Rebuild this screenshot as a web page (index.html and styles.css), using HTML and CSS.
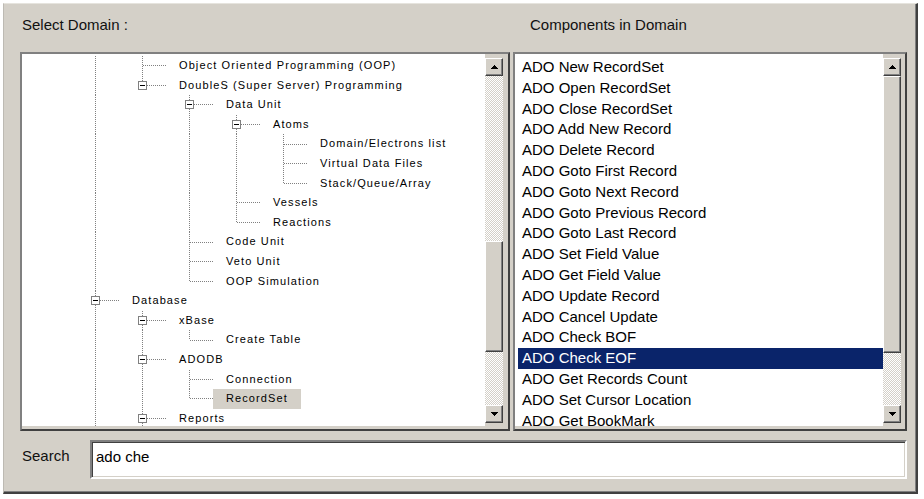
FILE: index.html
```html
<!DOCTYPE html>
<html>
<head>
<meta charset="utf-8">
<link rel="stylesheet" href="styles.css">
</head>
<body>
<div class="frame">
  <div class="header">
    <div class="lbl-left">Select Domain :</div>
    <div class="lbl-right">Components in Domain</div>
  </div>
  <div class="panels">
    <div class="panel panel-left">
      <div class="tree">
        <div class="row"><span class="c I"></span><span class="c T"></span><span class="t">Object Oriented Programming (OOP)</span></div>
        <div class="row"><span class="c I"></span><span class="c L"><i class="box"></i></span><span class="t">DoubleS (Super Server) Programming</span></div>
        <div class="row"><span class="c I"></span><span class="c"></span><span class="c T"><i class="box"></i></span><span class="t">Data Unit</span></div>
        <div class="row"><span class="c I"></span><span class="c"></span><span class="c I"></span><span class="c T"><i class="box"></i></span><span class="t">Atoms</span></div>
        <div class="row"><span class="c I"></span><span class="c"></span><span class="c I"></span><span class="c I"></span><span class="c T"></span><span class="t">Domain/Electrons list</span></div>
        <div class="row"><span class="c I"></span><span class="c"></span><span class="c I"></span><span class="c I"></span><span class="c T"></span><span class="t">Virtual Data Files</span></div>
        <div class="row"><span class="c I"></span><span class="c"></span><span class="c I"></span><span class="c I"></span><span class="c L"></span><span class="t">Stack/Queue/Array</span></div>
        <div class="row"><span class="c I"></span><span class="c"></span><span class="c I"></span><span class="c T"></span><span class="t">Vessels</span></div>
        <div class="row"><span class="c I"></span><span class="c"></span><span class="c I"></span><span class="c L"></span><span class="t">Reactions</span></div>
        <div class="row"><span class="c I"></span><span class="c"></span><span class="c T"></span><span class="t">Code Unit</span></div>
        <div class="row"><span class="c I"></span><span class="c"></span><span class="c T"></span><span class="t">Veto Unit</span></div>
        <div class="row"><span class="c I"></span><span class="c"></span><span class="c L"></span><span class="t">OOP Simulation</span></div>
        <div class="row"><span class="c T"><i class="box"></i></span><span class="t">Database</span></div>
        <div class="row"><span class="c I"></span><span class="c T"><i class="box"></i></span><span class="t">xBase</span></div>
        <div class="row"><span class="c I"></span><span class="c I"></span><span class="c L"></span><span class="t">Create Table</span></div>
        <div class="row"><span class="c I"></span><span class="c T"><i class="box"></i></span><span class="t">ADODB</span></div>
        <div class="row"><span class="c I"></span><span class="c I"></span><span class="c T"></span><span class="t">Connection</span></div>
        <div class="row"><span class="c I"></span><span class="c I"></span><span class="c L"></span><span class="t sel">RecordSet</span></div>
        <div class="row"><span class="c I"></span><span class="c T"><i class="box"></i></span><span class="t">Reports</span></div>
      </div>
      <div class="sb sb-left">
        <div class="btn"><svg width="7" height="4" viewBox="0 0 7 4"><polygon points="3.5,0 7,4 0,4" fill="#000"/></svg></div>
        <div class="track"><div class="thumb thumb-left"></div></div>
        <div class="btn"><svg width="7" height="4" viewBox="0 0 7 4"><polygon points="0,0 7,0 3.5,4" fill="#000"/></svg></div>
      </div>
    </div>
    <div class="panel panel-right">
      <div class="list">
        <div class="item">ADO New RecordSet</div>
        <div class="item">ADO Open RecordSet</div>
        <div class="item">ADO Close RecordSet</div>
        <div class="item">ADO Add New Record</div>
        <div class="item">ADO Delete Record</div>
        <div class="item">ADO Goto First Record</div>
        <div class="item">ADO Goto Next Record</div>
        <div class="item">ADO Goto Previous Record</div>
        <div class="item">ADO Goto Last Record</div>
        <div class="item">ADO Set Field Value</div>
        <div class="item">ADO Get Field Value</div>
        <div class="item">ADO Update Record</div>
        <div class="item">ADO Cancel Update</div>
        <div class="item">ADO Check BOF</div>
        <div class="item sel">ADO Check EOF</div>
        <div class="item">ADO Get Records Count</div>
        <div class="item">ADO Set Cursor Location</div>
        <div class="item">ADO Get BookMark</div>
      </div>
      <div class="sb sb-right">
        <div class="btn"><svg width="7" height="4" viewBox="0 0 7 4"><polygon points="3.5,0 7,4 0,4" fill="#000"/></svg></div>
        <div class="track"><div class="thumb thumb-right"></div></div>
        <div class="btn"><svg width="7" height="4" viewBox="0 0 7 4"><polygon points="0,0 7,0 3.5,4" fill="#000"/></svg></div>
      </div>
    </div>
  </div>
  <div class="search">
    <div class="search-lbl">Search</div>
    <div class="search-box">ado che</div>
  </div>
</div>
</body>
</html>
```

FILE: styles.css
```css
* { box-sizing: border-box; }
html, body { margin: 0; padding: 0; background: #fff; }
body { font-family: "Liberation Sans", Arial, sans-serif; color: #000; }

.frame {
  --vdot: repeating-linear-gradient(to bottom, #808080 0 1px, transparent 1px 2px);
  --hdot: repeating-linear-gradient(to right, #808080 0 1px, transparent 1px 2px);
  margin: 3px 0 0 3px;
  width: 915px;
  height: 491px;
  background: #d4d0c8;
  border-style: solid;
  border-width: 1px 2px 2px 1px;
  border-color: #e6e4de #404040 #404040 #bdbab3;
  box-shadow: inset -1px -1px #808080;
  padding: 0 9px 0 16px;
  display: flex;
  flex-direction: column;
}

.header { height: 48px; flex: none; display: flex; padding-top: 12px; font-size: 15px; line-height: 17px; color: #111; }
.lbl-left { width: 493px; padding-left: 2px; }
.lbl-right { padding-left: 17px; }

.panels { height: 379px; flex: none; display: flex; gap: 3px; }
.panel {
  border: 2px solid;
  border-color: #808080 #404040 #404040 #808080;
  display: flex;
  background: #d4d0c8;
  padding-bottom: 3px;
}
.panel-left { width: 490px; }
.panel-right { width: 394px; }

.tree {
  flex: 1;
  background: #fff;
  overflow: hidden;
  padding: 2px 0 0 50px;
  font-size: 11px;
  letter-spacing: 1.1px;
}
.row { height: 19.6px; display: flex; align-items: stretch; white-space: nowrap; }
.c { width: 47px; flex: none; display: flex; align-items: center; padding-left: 19px; }
.I { background: var(--vdot) 23px 0 / 1px 100% no-repeat; }
.T { background: var(--vdot) 23px 0 / 1px 100% no-repeat, var(--hdot) 24px 50% / 23px 1px no-repeat; }
.L { background: var(--vdot) 23px 0 / 1px 50% no-repeat, var(--hdot) 24px 50% / 23px 1px no-repeat; }
.box {
  display: block;
  width: 9px;
  height: 9px;
  border: 1px solid #808080;
  background: linear-gradient(#000, #000) center / 5px 1px no-repeat, #fff;
}
.t { padding: 0 13px; line-height: 19.6px; }
.t.sel { background: #d4d0c8; }

.sb { flex: none; display: flex; flex-direction: column; padding: 4px 5px 3px 0; width: 23px; }
.sb-right { width: 22px; padding-right: 4px; }
.btn {
  width: 18px;
  height: 18px;
  flex: none;
  background: #d4d0c8;
  border: 1px solid;
  border-color: #fff #404040 #404040 #fff;
  box-shadow: inset -1px -1px #808080;
  display: flex;
  align-items: center;
  justify-content: center;
}
.btn svg { display: block; shape-rendering: crispEdges; }
.track {
  flex: 1;
  background: repeating-conic-gradient(#fff 0 25%, #d4d0c8 0 50%) 0 0 / 2px 2px;
  display: flex;
  flex-direction: column;
}
.thumb {
  flex: none;
  background: #d4d0c8;
  border: 1px solid;
  border-color: #fff #404040 #404040 #fff;
  box-shadow: inset -1px -1px #808080;
}
.thumb-left { margin-top: 165px; height: 111px; }
.thumb-right { margin-top: 0; height: 277px; }

.list {
  flex: 1;
  background: #fff;
  overflow: hidden;
  padding: 3px 0 0 3px;
  font-size: 15px;
}
.item { height: 20.8px; line-height: 20.8px; padding-left: 4px; white-space: nowrap; }
.item.sel { background: #0a246a; color: #fff; }

.search { display: flex; margin-top: 9px; height: 39px; flex: none; }
.search-lbl { width: 70px; flex: none; padding: 7px 0 0 2px; font-size: 15px; line-height: 17px; color: #111; }
.search-box {
  flex: 1;
  background: #fff;
  border: 2px solid;
  border-color: #808080 #fff #fff #808080;
  box-shadow: inset 1px 1px #404040, inset -1px -1px #d4d0c8;
  padding: 6px 4px 0;
  font-size: 15px;
  line-height: 17px;
}
```
